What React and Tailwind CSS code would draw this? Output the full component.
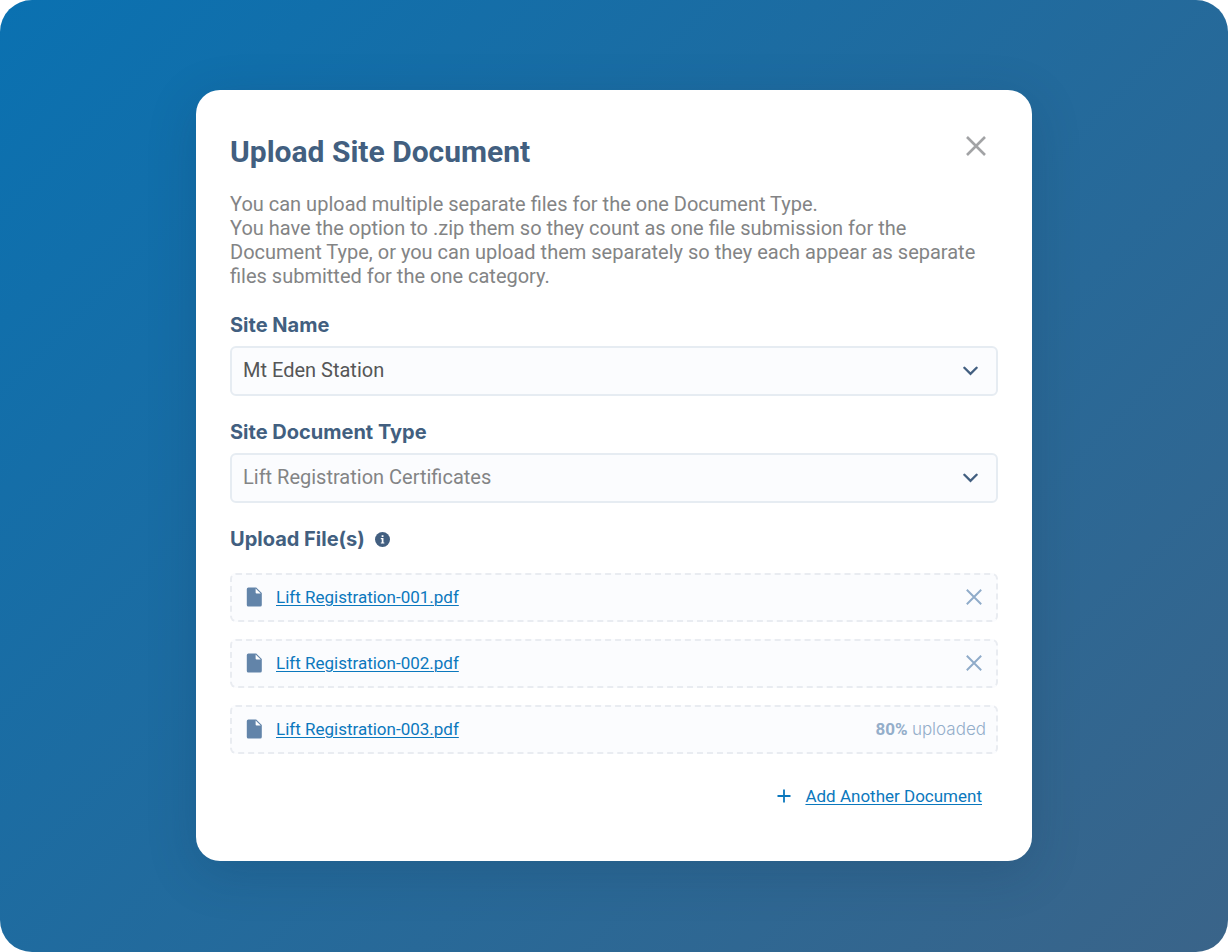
import { useState } from "react";

const IconClose = ({ className, strokeWidth = 2 }) => (
  <svg className={className} viewBox="0 0 20 20" fill="none" stroke="currentColor" strokeWidth={strokeWidth} aria-hidden="true">
    <path d="M1 1L19 19M19 1L1 19" />
  </svg>
);

const IconChevron = ({ className }) => (
  <svg className={className} viewBox="0 0 14 9" fill="none" stroke="currentColor" strokeWidth="2.2" strokeLinecap="round" aria-hidden="true">
    <path d="M1.3 1.5L7 7.2L12.7 1.5" />
  </svg>
);

const IconInfo = ({ className }) => (
  <svg className={className} viewBox="0 0 14 14" aria-hidden="true">
    <circle cx="7" cy="7" r="7" fill="currentColor" />
    <path d="M6.2 3.1H7.9V4.7H6.2zM5.4 5.7H7.9V9.7H8.7V10.7H5.4V9.7H6.3V6.7H5.4z" fill="#fff" />
  </svg>
);

const IconFile = ({ className }) => (
  <svg className={className} viewBox="0 0 16 20" aria-hidden="true">
    <path d="M2.4 0.5H10.2L15.8 6V18A1.6 1.6 0 0 1 14.2 19.6H2.4A1.6 1.6 0 0 1 0.8 18V2.1A1.6 1.6 0 0 1 2.4 0.5Z" fill="currentColor" />
    <path d="M9.6 1.6V5.6A1 1 0 0 0 10.6 6.6H14.8Z" fill="#fff" />
  </svg>
);

const IconPlus = ({ className }) => (
  <svg className={className} viewBox="0 0 14 14" fill="none" stroke="currentColor" strokeWidth="1.8" aria-hidden="true">
    <path d="M7 0.5V13.5M0.5 7H13.5" />
  </svg>
);

const SelectField = ({ id, label, options, value, onChange, textClass }) => (
  <div>
    <label htmlFor={id} className="block font-[Inter,sans-serif] text-xl leading-6 font-bold text-[#425f80]">
      {label}
    </label>
    <div className="relative mt-[9px]">
      <select
        id={id}
        value={value}
        onChange={(e) => onChange(e.target.value)}
        className={`block h-[50px] w-full appearance-none rounded-md border-2 border-[#e6ecf2] bg-[#fbfcfe] pr-12 pb-0.5 pl-[11px] text-xl outline-none ${textClass}`}
      >
        {options.map((option) => (
          <option key={option}>{option}</option>
        ))}
      </select>
      <IconChevron className="pointer-events-none absolute top-5 right-5 h-[10px] w-[15px] text-[#425f80]" />
    </div>
  </div>
);

const FileRow = ({ file, onRemove }) => (
  <li className="flex h-[49px] items-center rounded-md border-2 border-dashed border-[#e9ecf1] bg-[#fbfcfe] pr-2.5 pb-0.5 pl-3.5">
    <IconFile className="h-5 w-4 text-[#6284a9]" />
    <a href="#file" className="ml-3.5 text-[17px] leading-6 text-[#0b78bd] underline decoration-1 underline-offset-2">
      {file.name}
    </a>
    {file.progress ? (
      <span className="ml-auto text-[17px] leading-6 text-[#94aeca]">
        <b className="font-bold">{file.progress}%</b>{" "}
        <span className="font-[Inter,sans-serif] font-light">uploaded</span>
      </span>
    ) : (
      <button type="button" aria-label={`Remove ${file.name}`} onClick={onRemove} className="mr-1 ml-auto text-[#8fabc9]">
        <IconClose className="h-4 w-4" strokeWidth={2.4} />
      </button>
    )}
  </li>
);

const App = () => {
  const [site, setSite] = useState("Mt Eden Station");
  const [documentType, setDocumentType] = useState("Lift Registration Certificates");
  const [files, setFiles] = useState([
    { name: "Lift Registration-001.pdf" },
    { name: "Lift Registration-002.pdf" },
    { name: "Lift Registration-003.pdf", progress: 80 },
  ]);

  const removeFile = (name) => {
    setFiles(files.filter((file) => file.name !== name));
  };

  return (
    <div className="bg-white">
      <main className="flex min-h-screen items-center justify-center rounded-[32px] bg-linear-[135deg,#0a71b1,#3a6489] px-6 pt-10 pb-[41px] font-[Roboto,sans-serif]">
        <section
          role="dialog"
          aria-labelledby="dialog-title"
          className="w-full max-w-[836px] rounded-3xl bg-white px-[34px] pt-11 pb-[53px] shadow-[0_12px_50px_rgba(20,50,80,0.2)]"
        >
          <div className="flex items-start justify-between">
            <h1 id="dialog-title" className="text-[30px] leading-9 font-bold text-[#425f80]">
              Upload Site Document
            </h1>
            <button type="button" aria-label="Close" className="mt-0.5 mr-3 text-[#a2a3a5]">
              <IconClose className="h-5 w-5" strokeWidth={2.6} />
            </button>
          </div>
          <p className="mt-[22px] text-xl leading-6 text-[#838485]">
            You can upload multiple separate files for the one Document Type.
            <br />
            You have the option to .zip them so they count as one file submission for the Document Type, or you can
            upload them separately so they each appear as separate files submitted for the one category.
          </p>

          <form className="mt-[25px]" onSubmit={(e) => e.preventDefault()}>
            <div className="space-y-6">
              <SelectField
                id="site"
                label="Site Name"
                options={["Mt Eden Station"]}
                value={site}
                onChange={setSite}
                textClass="text-[#555657]"
              />
              <SelectField
                id="documentType"
                label="Site Document Type"
                options={["Lift Registration Certificates"]}
                value={documentType}
                onChange={setDocumentType}
                textClass="text-[#838485]"
              />
            </div>

            <h2 className="mt-6 flex items-center font-[Inter,sans-serif] text-xl leading-6 font-bold text-[#425f80]">
              Upload File(s)
              <IconInfo className="ml-2.5 h-[15px] w-[15px]" />
            </h2>
            <ul className="mt-[22px] space-y-[17px]">
              {files.map((file) => (
                <FileRow key={file.name} file={file} onRemove={() => removeFile(file.name)} />
              ))}
            </ul>

            <button type="button" className="mt-[30px] mr-4 ml-auto flex items-center text-[17px] leading-6 text-[#0b78bd]">
              <IconPlus className="mr-3.5 h-3.5 w-3.5" />
              <span className="underline decoration-1 underline-offset-2">Add Another Document</span>
            </button>
          </form>
        </section>
      </main>
    </div>
  );
};

export default App;
